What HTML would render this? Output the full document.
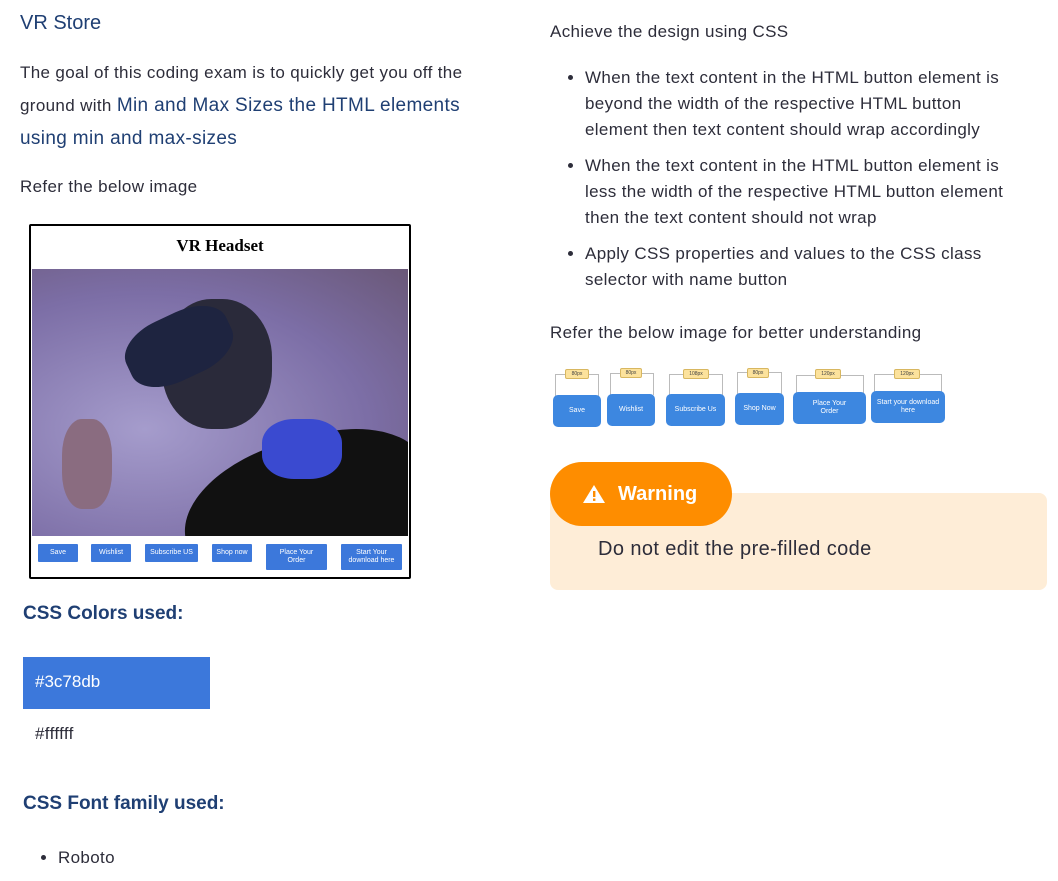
<!DOCTYPE html>
<html><head><style>
*{margin:0;padding:0;box-sizing:border-box}
body{width:1058px;height:879px;background:#fff;font-family:"Liberation Sans",sans-serif;color:#2d2d3a;position:relative;overflow:hidden}
.a{position:absolute}
.h{color:#1f3f73}
.t{font-size:17px;line-height:26px;letter-spacing:0.35px;white-space:nowrap}
.fb{position:absolute;background:#3c78db;color:#fff;font-size:7px;text-align:center;display:flex;align-items:center;justify-content:center;line-height:8px;border-radius:1px}
.sb{position:absolute;background:#3d87e0;color:#fff;font-size:7px;text-align:center;display:flex;align-items:center;justify-content:center;border-radius:5px;line-height:8px}
.lb{position:absolute;border:1px solid #bbb;border-bottom:none;height:22px}
.tg{position:absolute;background:#fce29c;border:1px solid #d8b760;font-size:5px;height:10px;display:flex;align-items:center;justify-content:center;border-radius:2px;color:#444}
li{margin-bottom:10px}
</style></head><body>
<div class="a h" style="left:20px;top:12px;font-size:20px">VR Store</div>
<div class="a t" style="left:20px;top:56px;line-height:33px">The goal of this coding exam is to quickly get you off the<br>ground with <span class="h" style="font-size:19px">Min and Max Sizes the HTML elements</span><br><span class="h" style="font-size:19px">using min and max-sizes</span></div>
<div class="a t" style="left:20px;top:174px">Refer the below image</div>

<div class="a" style="left:29px;top:224px;width:382px;height:355px;border:2px solid #000;border-radius:2px"></div>
<div class="a" style="left:29px;top:236px;width:382px;text-align:center;font-family:'Liberation Serif',serif;font-weight:bold;font-size:17px;color:#000">VR Headset</div>
<div class="a" style="left:32px;top:269px;width:376px;height:267px;overflow:hidden;background:radial-gradient(ellipse at 30% 60%,#a59ccc,#7c6ea6 60%,#6a5878)">
 <div class="a" style="left:150px;top:170px;width:250px;height:140px;background:#111;border-radius:50% 40% 0 0;transform:rotate(-15deg)"></div>
 <div class="a" style="left:130px;top:30px;width:110px;height:130px;background:#2a2a3a;border-radius:45%"></div>
 <div class="a" style="left:92px;top:45px;width:110px;height:65px;background:#1e2440;border-radius:40%;transform:rotate(-25deg)"></div>
 <div class="a" style="left:30px;top:150px;width:50px;height:90px;background:#8a6c80;border-radius:40%"></div>
 <div class="a" style="left:230px;top:150px;width:80px;height:60px;background:#3a4ad0;border-radius:40%"></div>
</div>
<div class="fb" style="left:38px;top:544px;width:40px;height:18px">Save</div>
<div class="fb" style="left:91px;top:544px;width:40px;height:18px">Wishlist</div>
<div class="fb" style="left:145px;top:544px;width:53px;height:18px">Subscribe US</div>
<div class="fb" style="left:212px;top:544px;width:40px;height:18px">Shop now</div>
<div class="fb" style="left:266px;top:544px;width:61px;height:26px">Place Your<br>Order</div>
<div class="fb" style="left:341px;top:544px;width:61px;height:26px">Start Your<br>download here</div>

<div class="a h" style="left:23px;top:603px;font-size:19px;font-weight:bold">CSS Colors used:</div>
<div class="a" style="left:23px;top:657px;width:187px;height:52px;background:#3c78db;color:#fff;font-size:17px;padding:15px 0 0 12px">#3c78db</div>
<div class="a t" style="left:35px;top:721px">#ffffff</div>
<div class="a h" style="left:23px;top:793px;font-size:19px;font-weight:bold">CSS Font family used:</div>
<ul class="a t" style="left:38px;top:845px;padding-left:20px"><li>Roboto</li></ul>

<div class="a t" style="left:550px;top:19px">Achieve the design using CSS</div>
<ul class="a t" style="left:567px;top:65px;width:480px;padding-left:18px">
<li>When the text content in the HTML button element is<br>beyond the width of the respective HTML button<br>element then text content should wrap accordingly</li>
<li>When the text content in the HTML button element is<br>less the width of the respective HTML button element<br>then the text content should not wrap</li>
<li>Apply CSS properties and values to the CSS class<br>selector with name button</li></ul>
<div class="a t" style="left:550px;top:320px">Refer the below image for better understanding</div>

<div class="lb" style="left:555px;top:374px;width:44px"></div><div class="tg" style="left:565px;top:369px;width:24px">80px</div>
<div class="lb" style="left:610px;top:373px;width:44px"></div><div class="tg" style="left:620px;top:368px;width:22px">80px</div>
<div class="lb" style="left:669px;top:374px;width:54px"></div><div class="tg" style="left:683px;top:369px;width:26px">108px</div>
<div class="lb" style="left:737px;top:372px;width:45px"></div><div class="tg" style="left:747px;top:368px;width:22px">80px</div>
<div class="lb" style="left:796px;top:375px;width:68px"></div><div class="tg" style="left:815px;top:369px;width:26px">120px</div>
<div class="lb" style="left:874px;top:374px;width:68px"></div><div class="tg" style="left:894px;top:369px;width:26px">120px</div>
<div class="sb" style="left:553px;top:395px;width:48px;height:32px">Save</div>
<div class="sb" style="left:607px;top:394px;width:48px;height:32px">Wishlist</div>
<div class="sb" style="left:666px;top:394px;width:59px;height:32px">Subscribe Us</div>
<div class="sb" style="left:735px;top:393px;width:49px;height:32px">Shop Now</div>
<div class="sb" style="left:793px;top:392px;width:73px;height:32px">Place Your<br>Order</div>
<div class="sb" style="left:871px;top:391px;width:74px;height:32px">Start your download<br>here</div>

<div class="a" style="left:550px;top:493px;width:497px;height:97px;background:#feedd7;border-radius:8px"></div>
<div class="a" style="left:550px;top:462px;width:182px;height:64px;background:#fe8d00;border-radius:32px;color:#fff;font-weight:bold;font-size:20px;display:flex;align-items:center;padding-left:32px">
<svg width="24" height="20" viewBox="0 0 24 20" style="margin-right:12px"><path d="M12 1L23 19H1Z" fill="#fff"/><rect x="11" y="7" width="2.4" height="6" fill="#fe8d00"/><rect x="11" y="14.5" width="2.4" height="2.4" fill="#fe8d00"/></svg>Warning</div>
<div class="a" style="left:598px;top:538px;font-size:20px;letter-spacing:0.4px;color:#2d2d3a">Do not edit the pre-filled code</div>
</body></html>
